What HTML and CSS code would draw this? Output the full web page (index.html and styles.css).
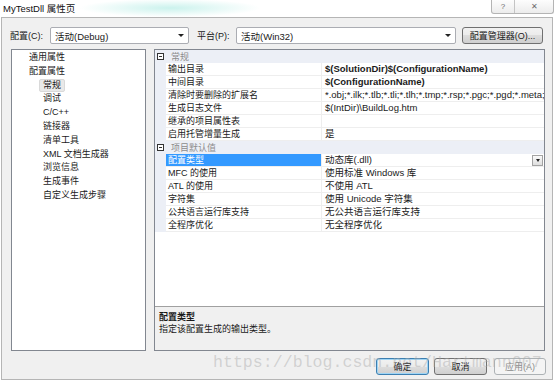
FILE: index.html
```html
<!DOCTYPE html>
<html lang="zh-CN">
<head>
    <meta charset="UTF-8">
    <title>MyTestDll 属性页</title>
    <link rel="stylesheet" href="styles.css">
</head>
<body>
    <div class="titlebar">
        <span class="title">MyTestDll 属性页</span>
        <div class="caption-btns">
            <span class="cap-btn cap-help">?</span>
            <span class="cap-btn cap-close">&#x2715;</span>
        </div>
    </div>

    <div class="dialog">
        <div class="config-row">
            <label class="lbl">配置(C):</label>
            <div class="combo combo-config">
                <span>活动(Debug)</span>
                <span class="arrow"></span>
            </div>
            <label class="lbl lbl-platform">平台(P):</label>
            <div class="combo combo-platform">
                <span>活动(Win32)</span>
                <span class="arrow"></span>
            </div>
            <div class="btn btn-manager">配置管理器(O)...</div>
        </div>

        <div class="main">
            <ul class="tree">
                <li class="lv1"><span>通用属性</span></li>
                <li class="lv1"><span>配置属性</span></li>
                <li class="lv2"><span class="current">常规</span></li>
                <li class="lv2"><span>调试</span></li>
                <li class="lv2"><span>C/C++</span></li>
                <li class="lv2"><span>链接器</span></li>
                <li class="lv2"><span>清单工具</span></li>
                <li class="lv2"><span>XML 文档生成器</span></li>
                <li class="lv2"><span>浏览信息</span></li>
                <li class="lv2"><span>生成事件</span></li>
                <li class="lv2"><span>自定义生成步骤</span></li>
            </ul>

            <div class="props">
                <div class="grid">
                    <div class="cat"><span class="toggle"></span><span>常规</span></div>
                    <div class="row"><span class="gut"></span><span class="name">输出目录</span><span class="val bold">$(SolutionDir)$(ConfigurationName)</span></div>
                    <div class="row"><span class="gut"></span><span class="name">中间目录</span><span class="val bold">$(ConfigurationName)</span></div>
                    <div class="row"><span class="gut"></span><span class="name">清除时要删除的扩展名</span><span class="val">*.obj;*.ilk;*.tlb;*.tli;*.tlh;*.tmp;*.rsp;*.pgc;*.pgd;*.meta;$(TargetPath)</span></div>
                    <div class="row"><span class="gut"></span><span class="name">生成日志文件</span><span class="val">$(IntDir)\BuildLog.htm</span></div>
                    <div class="row"><span class="gut"></span><span class="name">继承的项目属性表</span><span class="val"></span></div>
                    <div class="row"><span class="gut"></span><span class="name">启用托管增量生成</span><span class="val">是</span></div>
                    <div class="cat"><span class="toggle"></span><span>项目默认值</span></div>
                    <div class="row selected"><span class="gut"></span><span class="name">配置类型</span><span class="val">动态库(.dll)<span class="dd"></span></span></div>
                    <div class="row"><span class="gut"></span><span class="name">MFC 的使用</span><span class="val">使用标准 Windows 库</span></div>
                    <div class="row"><span class="gut"></span><span class="name">ATL 的使用</span><span class="val">不使用 ATL</span></div>
                    <div class="row"><span class="gut"></span><span class="name">字符集</span><span class="val">使用 Unicode 字符集</span></div>
                    <div class="row"><span class="gut"></span><span class="name">公共语言运行库支持</span><span class="val">无公共语言运行库支持</span></div>
                    <div class="row"><span class="gut"></span><span class="name">全程序优化</span><span class="val">无全程序优化</span></div>
                </div>
                <div class="desc">
                    <div class="desc-title">配置类型</div>
                    <div class="desc-text">指定该配置生成的输出类型。</div>
                </div>
            </div>
        </div>

        <div class="footer">
            <div class="btn btn-ok">确定</div>
            <div class="btn">取消</div>
            <div class="btn btn-disabled">应用(A)</div>
        </div>

        <div class="watermark">https://blog.csdn.net/Hartmann007</div>
    </div>
</body>
</html>
```

FILE: styles.css
```css
* {
    margin: 0;
    padding: 0;
    box-sizing: border-box;
}

body {
    width: 554px;
    height: 381px;
    overflow: hidden;
    font-family: "Liberation Sans", "Noto Sans CJK SC", sans-serif;
    font-size: 9px;
    color: #1a1a1a;
    background: #fff radial-gradient(ellipse 90px 9px at 170px 8px, rgba(160, 232, 222, 0.55), rgba(255, 255, 255, 0));
}

.titlebar {
    height: 17px;
    display: flex;
    justify-content: space-between;
    align-items: flex-start;
}

.title {
    padding: 3px 0 0 3px;
    font-size: 9.5px;
    line-height: 11px;
    color: #111;
}

.caption-btns {
    display: flex;
    height: 14px;
    border: 1px solid #b4b4b4;
    border-top: none;
    border-radius: 0 0 3px 3px;
    background: linear-gradient(#fdfdfd, #ececec);
}

.cap-btn {
    display: flex;
    align-items: center;
    justify-content: center;
    color: #6a6a6a;
    font-size: 8px;
    line-height: 13px;
}

.cap-help {
    width: 23px;
    border-right: 1px solid #c4c4c4;
}

.cap-close {
    width: 38px;
}

.dialog {
    position: relative;
    width: 552px;
    height: 363px;
    margin-left: 1px;
    border: 1px solid #b5b5b5;
    background-color: #f0f0f0;
}

/* top configuration row */
.config-row {
    display: flex;
    align-items: center;
    height: 17px;
    margin-top: 9px;
    padding-left: 8px;
}

.lbl {
    width: 40px;
    font-size: 9px;
}

.lbl-platform {
    width: 39px;
    margin-left: 8px;
}

.combo {
    display: flex;
    align-items: center;
    justify-content: space-between;
    height: 17px;
    padding: 0 4px 0 4px;
    border: 1px solid #abadb3;
    border-radius: 2px;
    background-color: #fff;
    font-size: 9.5px;
}

.combo-config {
    width: 139px;
}

.combo-platform {
    width: 220px;
}

.arrow {
    width: 0;
    height: 0;
    border-left: 3px solid transparent;
    border-right: 3px solid transparent;
    border-top: 3px solid #222;
}

.btn {
    display: flex;
    align-items: center;
    justify-content: center;
    height: 17px;
    width: 53px;
    border: 1px solid #707070;
    border-radius: 3px;
    background: linear-gradient(#f2f2f2, #ebebeb 50%, #dddddd 50%, #cfcfcf);
    font-size: 9px;
}

.btn-manager {
    width: 81px;
    margin-left: 6px;
}

/* main area */
.main {
    display: flex;
    gap: 8px;
    height: 302px;
    margin: 5px 0 0 9px;
}

.tree {
    width: 135px;
    list-style: none;
    padding-top: 1px;
    border: 1px solid #828790;
    background-color: #fff;
}

.tree li {
    height: 13.8px;
    line-height: 13.8px;
}

.tree .lv1 {
    padding-left: 17px;
}

.tree .lv2 {
    padding-left: 31px;
}

.tree .current {
    display: inline-block;
    margin-left: -4px;
    line-height: 11px;
    padding: 0 3px;
    border: 1px solid #d9d9d9;
    border-radius: 2px;
    background-color: #e9e9e9;
}

.props {
    display: flex;
    flex-direction: column;
    width: 391px;
    border: 1px solid #828790;
    background-color: #fff;
}

.grid {
    flex: 1;
}

.cat {
    display: flex;
    align-items: center;
    height: 13px;
    background-color: #eceff6;
    color: #8c8c8c;
}

.toggle {
    position: relative;
    width: 7px;
    height: 7px;
    margin: 0 7px 0 2px;
    border: 1px solid #333;
    background-color: #fff;
}

.toggle::after {
    content: '';
    position: absolute;
    left: 1px;
    top: 2px;
    width: 3px;
    height: 1px;
    background-color: #333;
}

.row {
    display: grid;
    grid-template-columns: 11px 156px 1fr;
    height: 13px;
}

.gut {
    background-color: #eceff6;
}

.name,
.val {
    line-height: 12px;
    border-bottom: 1px solid #eeeeee;
    white-space: nowrap;
    overflow: hidden;
}

.name {
    padding-left: 2px;
    border-right: 1px solid #eeeeee;
}

.val {
    padding-left: 3px;
    font-size: 9.5px;
}

.val.bold {
    font-weight: bold;
}

.row.selected .name {
    background-color: #3399ff;
    color: #fff;
}

.row.selected .val {
    display: flex;
    justify-content: space-between;
    align-items: center;
}

.dd {
    display: flex;
    align-items: center;
    justify-content: center;
    width: 11px;
    height: 11px;
    margin-right: 1px;
    border: 1px solid #a3a3a3;
    background: linear-gradient(#fafafa, #dedede);
}

.dd::after {
    content: '';
    border-left: 2.5px solid transparent;
    border-right: 2.5px solid transparent;
    border-top: 3px solid #222;
}

.desc {
    height: 44px;
    padding: 4px 4px;
    border-top: 1px solid #a0a0a0;
    background-color: #f0f0f0;
    line-height: 12px;
}

.desc-title {
    font-weight: bold;
}

/* bottom buttons */
.footer {
    display: flex;
    justify-content: flex-end;
    gap: 5px;
    margin-top: 7px;
    padding-right: 6px;
}

.btn-ok {
    border-color: #3c7fb1;
    box-shadow: inset 0 0 0 1px #9fd5f5;
}

.btn-disabled {
    width: 52px;
    margin-left: 2px;
    border-color: #adb2b5;
    background: #f4f4f4;
    color: #8a8a8a;
}

.watermark {
    position: absolute;
    left: 211px;
    top: 336px;
    font-family: "Liberation Mono", monospace;
    font-size: 16.6px;
    line-height: 17px;
    color: rgba(170, 170, 170, 0.45);
    white-space: nowrap;
    pointer-events: none;
}
```
